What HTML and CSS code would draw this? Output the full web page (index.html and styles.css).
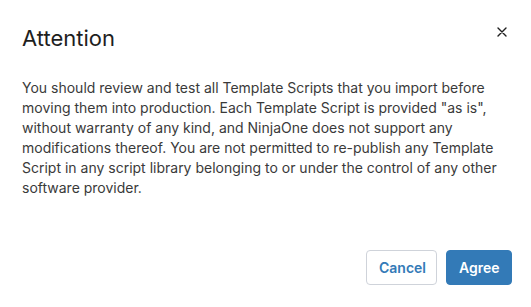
FILE: index.html
```html
<!DOCTYPE html>
<html>
<head>
<meta charset="utf-8">
<link rel="stylesheet" href="styles.css">
</head>
<body>
<div class="modal">
  <div class="header">
    <h2 class="title">Attention</h2>
    <button class="close" aria-label="Close">
      <svg width="10" height="10" viewBox="0 0 10 10"><path d="M1 1L9 9M9 1L1 9" stroke="#1f1f1f" stroke-width="1.4" stroke-linecap="round"/></svg>
    </button>
  </div>
  <div class="body">
    <p class="text">You should review and test all Template Scripts that you import before moving them into production. Each Template Script is provided "as is", without warranty of any kind, and NinjaOne does not support any modifications thereof. You are not permitted to re-publish any Template Script in any script library belonging to or under the control of any other software provider.</p>
  </div>
  <div class="footer">
    <button class="btn btn-secondary">Cancel</button>
    <button class="btn btn-primary">Agree</button>
  </div>
</div>
</body>
</html>
```
FILE: styles.css
```css
* { box-sizing: border-box; }
html, body { margin: 0; padding: 0; background: #fff; }
body { font-family: Inter, "Noto Sans", sans-serif; color: #333; }
.modal { width: 531px; height: 307px; display: flex; flex-direction: column; padding: 0 19px 0 22px; }
.header { display: flex; justify-content: space-between; align-items: flex-start; padding-top: 24px; }
.title { margin: 0; font-size: 22px; font-weight: 400; line-height: 28px; color: #1e1e1e; }
.close { border: 0; background: none; padding: 0; margin: 3px 5px 0 0; width: 10px; height: 10px; display: flex; cursor: pointer; }
.body { padding-top: 26px; }
.text { margin: 0; font-size: 14px; line-height: 20px; color: #3a3a3a; width: 480px; }
.footer { margin-top: auto; display: flex; justify-content: flex-end; gap: 9px; padding-bottom: 22px; }
.btn { height: 35px; border-radius: 4px; font-family: Inter, sans-serif; font-size: 14px; font-weight: 600; padding: 0 12px; cursor: pointer; }
.btn-secondary { background: #fff; border: 1px solid #cfd3da; color: #337ab7; width: 71px; }
.btn-primary { background: #337ab7; border: 1px solid #337ab7; color: #fff; width: 66px; }
```
